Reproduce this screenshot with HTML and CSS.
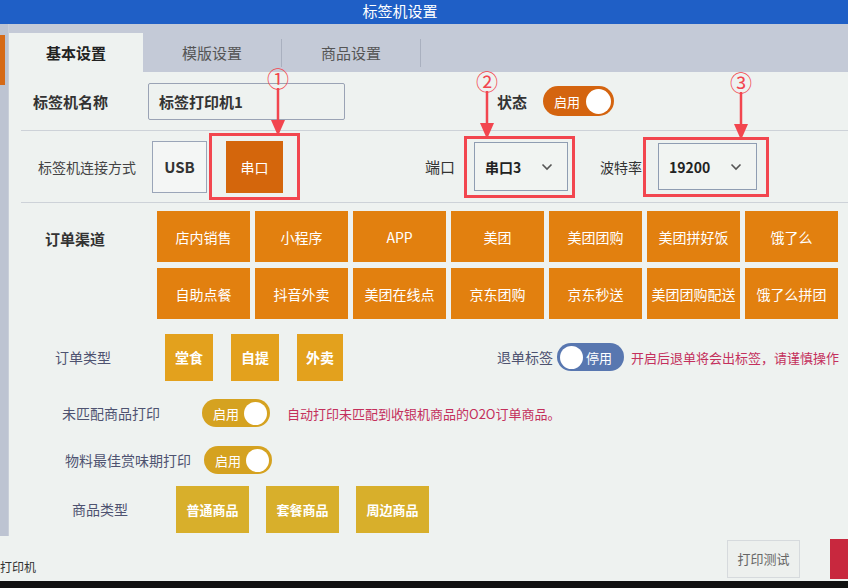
FILE: index.html
```html
<!DOCTYPE html>
<html lang="zh-CN">
<head>
    <meta charset="UTF-8">
    <meta name="viewport" content="width=device-width, initial-scale=1.0">
    <title>标签机设置</title>
    <link rel="stylesheet" href="styles.css">
</head>
<body>
    <div class="topbar"><span>标签机设置</span></div>
    <div class="main">
        <div class="side"><div class="side-tab"></div></div>
        <div class="dialog">
            <div class="tabs">
                <div class="tab active">基本设置</div>
                <div class="tab">模版设置</div>
                <div class="tab">商品设置</div>
            </div>

            <div class="row row-name">
                <span class="lbl lbl-name">标签机名称</span>
                <div class="input">标签打印机1</div>
                <span class="lbl lbl-state">状态</span>
                <div class="toggle on orange"><span>启用</span><i></i></div>
            </div>

            <div class="row row-conn">
                <span class="lbl lbl-conn">标签机连接方式</span>
                <div class="opt">USB</div>
                <div class="mark mark-1">
                    <div class="note note-1">
                        <span>①</span>
                        <svg width="16" height="48" viewBox="0 0 16 48"><line x1="8" y1="0" x2="8" y2="36" stroke="#f2464f" stroke-width="2.5"/><polygon points="1,32 15,32 8,48" fill="#f2464f"/></svg>
                    </div>
                    <div class="opt selected">串口</div>
                </div>
                <span class="lbl lbl-port">端口</span>
                <div class="mark mark-2">
                    <div class="note note-2">
                        <span>②</span>
                        <svg width="16" height="48" viewBox="0 0 16 48"><line x1="8" y1="0" x2="8" y2="36" stroke="#f2464f" stroke-width="2.5"/><polygon points="1,32 15,32 8,48" fill="#f2464f"/></svg>
                    </div>
                    <div class="select sel-port">串口3
                        <svg width="12" height="8" viewBox="0 0 12 8"><polyline points="1.5,1.5 6,6 10.5,1.5" fill="none" stroke="#555" stroke-width="1.6"/></svg>
                    </div>
                </div>
                <span class="lbl lbl-baud">波特率</span>
                <div class="mark mark-3">
                    <div class="note note-3">
                        <span>③</span>
                        <svg width="16" height="48" viewBox="0 0 16 48"><line x1="8" y1="0" x2="8" y2="36" stroke="#f2464f" stroke-width="2.5"/><polygon points="1,32 15,32 8,48" fill="#f2464f"/></svg>
                    </div>
                    <div class="select sel-baud">19200
                        <svg width="12" height="8" viewBox="0 0 12 8"><polyline points="1.5,1.5 6,6 10.5,1.5" fill="none" stroke="#555" stroke-width="1.6"/></svg>
                    </div>
                </div>
            </div>

            <div class="row row-channel">
                <span class="lbl lbl-channel">订单渠道</span>
                <div class="channels">
                    <div class="chip">店内销售</div>
                    <div class="chip">小程序</div>
                    <div class="chip">APP</div>
                    <div class="chip">美团</div>
                    <div class="chip">美团团购</div>
                    <div class="chip">美团拼好饭</div>
                    <div class="chip">饿了么</div>
                    <div class="chip">自助点餐</div>
                    <div class="chip">抖音外卖</div>
                    <div class="chip">美团在线点</div>
                    <div class="chip">京东团购</div>
                    <div class="chip">京东秒送</div>
                    <div class="chip">美团团购配送</div>
                    <div class="chip">饿了么拼团</div>
                </div>
            </div>

            <div class="row row-type">
                <span class="lbl soft lbl-type">订单类型</span>
                <div class="sq">堂食</div>
                <div class="sq">自提</div>
                <div class="sq">外卖</div>
                <span class="lbl soft lbl-refund">退单标签</span>
                <div class="toggle off blue"><i></i><span>停用</span></div>
                <span class="warn">开启后退单将会出标签，请谨慎操作</span>
            </div>

            <div class="row row-unmatched">
                <span class="lbl soft lbl-unmatched">未匹配商品打印</span>
                <div class="toggle on gold"><span>启用</span><i></i></div>
                <span class="warn">自动打印未匹配到收银机商品的O2O订单商品。</span>
            </div>

            <div class="row row-material">
                <span class="lbl soft lbl-material">物料最佳赏味期打印</span>
                <div class="toggle on gold"><span>启用</span><i></i></div>
            </div>

            <div class="row row-goods">
                <span class="lbl soft lbl-goods">商品类型</span>
                <div class="goods">普通商品</div>
                <div class="goods">套餐商品</div>
                <div class="goods">周边商品</div>
            </div>
        </div>
    </div>
    <div class="footer">
        <span class="printer">打印机</span>
        <div class="btn-test">打印测试</div>
        <div class="btn-save"></div>
    </div>
    <div class="bezel"></div>
</body>
</html>
```

FILE: styles.css
```css
body {
    margin: 0;
    width: 848px;
    height: 588px;
    overflow: hidden;
    font-family: "Noto Sans CJK SC", "Noto Sans", sans-serif;
    background-color: #eef2f0;
    color: #333;
}
.topbar {
    height: 24px;
    background-color: #1f5fc6;
    color: #fff;
    text-align: center;
    font-size: 15px;
    line-height: 22px;
    overflow: hidden;
}
.topbar span {
    display: inline-block;
    margin-left: -48px;
}
.main {
    display: flex;
    height: 512px;
}
.side {
    width: 8px;
    background-color: #bdc4d2;
    padding-top: 11px;
}
.side-tab {
    width: 5px;
    height: 50px;
    background-color: #d56a17;
}
.dialog {
    flex: 1;
    background-color: #eef2f0;
    border-left: 1px solid #c9cfd9;
}
.tabs {
    display: flex;
    height: 39px;
    padding-top: 9px;
    background-color: #c4cad7;
}
.tab {
    width: 139px;
    height: 28px;
    margin-top: 6px;
    box-sizing: border-box;
    border-right: 1px solid #a9b0bf;
    font-size: 15px;
    line-height: 28px;
    text-align: center;
    color: #555;
}
.tab.active {
    width: 134px;
    height: 39px;
    margin-top: 0;
    line-height: 39px;
    background-color: #eef2f0;
    color: #222;
    font-weight: bold;
    border-right: none;
}
.row {
    display: flex;
    align-items: center;
    box-sizing: border-box;
}
.lbl {
    font-size: 15px;
    white-space: nowrap;
}
.lbl.soft {
    font-size: 14px;
    color: #4e5370;
}
.row-name {
    height: 59px;
    margin-left: 12px;
    padding-left: 12px;
    border-bottom: 1px solid #cdd2d8;
}
.lbl-name {
    width: 115px;
    font-weight: bold;
}
.input {
    width: 197px;
    height: 37px;
    box-sizing: border-box;
    border: 1px solid #9aa3b5;
    border-radius: 2px;
    padding-left: 10px;
    font-size: 15px;
    line-height: 35px;
    font-weight: bold;
}
.lbl-state {
    margin-left: 152px;
    width: 46px;
    font-weight: bold;
}
.toggle {
    display: flex;
    align-items: center;
    justify-content: space-between;
    flex-shrink: 0;
    box-sizing: border-box;
    height: 28px;
    width: 68px;
    border-radius: 14px;
    padding: 0 3px 0 11px;
    color: #fff;
    font-size: 13px;
}
.toggle i {
    width: 23px;
    height: 23px;
    border-radius: 50%;
    background-color: #fff;
}
.toggle.off {
    padding: 0 12px 0 3px;
}
.toggle.orange {
    width: 71px;
    height: 30px;
    border-radius: 15px;
    background-color: #d4640f;
}
.toggle.orange i {
    width: 25px;
    height: 25px;
}
.toggle.blue {
    width: 67px;
    background-color: #5877b0;
}
.toggle.gold {
    background-color: #d5a220;
}
.row-conn {
    height: 72px;
    margin-left: 12px;
    padding-left: 17px;
    border-bottom: 1px solid #cdd2d8;
}
.lbl-conn {
    width: 114px;
    font-size: 14px;
    color: #444;
}
.opt {
    width: 55px;
    height: 52px;
    box-sizing: border-box;
    border: 1px solid #9aa5b8;
    background-color: #f4f6f5;
    font-size: 15px;
    font-weight: bold;
    display: flex;
    align-items: center;
    justify-content: center;
}
.opt.selected {
    width: 57px;
    border: none;
    background-color: #d4660c;
    color: #fff;
    font-size: 14px;
    font-weight: normal;
}
.mark {
    position: relative;
    display: flex;
    align-items: center;
    box-sizing: border-box;
    border: 3px solid #f2464f;
}
.mark-1 {
    width: 91px;
    height: 67px;
    margin-left: 2px;
    padding-left: 14px;
}
.mark-2 {
    width: 111px;
    height: 62px;
    padding-left: 7px;
}
.mark-3 {
    width: 126px;
    height: 60px;
    padding-left: 12px;
}
.note {
    position: absolute;
    bottom: 100%;
    display: flex;
    flex-direction: column;
    align-items: center;
    transform: translateX(-50%);
    color: #f2464f;
    font-size: 22px;
    line-height: 22px;
    z-index: 2;
}
.note-1 { left: 66px; }
.note-2 { left: 20px; }
.note-3 { left: 95px; }
.lbl-port {
    margin-left: 125px;
    width: 39px;
}
.lbl-baud {
    margin-left: 25px;
    width: 43px;
    font-size: 14px;
}
.select {
    display: flex;
    align-items: center;
    justify-content: space-between;
    box-sizing: border-box;
    border: 1px solid #8f9db2;
    background-color: #f1f4f2;
    padding: 0 14px 0 10px;
    font-size: 14px;
    font-weight: bold;
    color: #222;
}
.sel-port {
    width: 94px;
    height: 49px;
}
.sel-baud {
    width: 99px;
    height: 47px;
}
.row-channel {
    align-items: flex-start;
    padding: 8px 0 11px 36px;
}
.lbl-channel {
    width: 112px;
    padding-top: 17px;
    font-weight: bold;
}
.channels {
    display: grid;
    grid-template-columns: repeat(7, 93px);
    grid-auto-rows: 51px;
    gap: 6px 5px;
}
.chip {
    background-color: #e2800f;
    color: #fff;
    font-size: 14px;
    display: flex;
    align-items: center;
    justify-content: center;
}
.row-type {
    height: 54px;
    padding-left: 46px;
}
.lbl-type {
    width: 110px;
}
.sq {
    width: 48px;
    height: 47px;
    margin-right: 18px;
    background-color: #e3a11d;
    color: #fff;
    font-size: 14px;
    font-weight: bold;
    display: flex;
    align-items: center;
    justify-content: center;
}
.sq:nth-of-type(3) {
    width: 46px;
}
.lbl-refund {
    margin-left: 136px;
    width: 60px;
}
.warn {
    margin-left: 7px;
    font-size: 13px;
    color: #c4305c;
    white-space: nowrap;
}
.row-unmatched {
    height: 58px;
    padding-left: 53px;
}
.lbl-unmatched {
    width: 140px;
}
.row-unmatched .warn {
    margin-left: 17px;
}
.row-material {
    height: 36px;
    padding-left: 56px;
}
.lbl-material {
    width: 139px;
}
.row-goods {
    height: 62px;
    padding-left: 63px;
}
.lbl-goods {
    width: 104px;
    font-size: 13px;
}
.goods {
    width: 73px;
    height: 47px;
    margin-right: 17px;
    background-color: #d8af2b;
    color: #fff;
    font-size: 13px;
    font-weight: bold;
    display: flex;
    align-items: center;
    justify-content: center;
}
.footer {
    display: flex;
    align-items: center;
    height: 45px;
    background-color: #eef2f0;
    overflow: hidden;
}
.printer {
    flex-shrink: 0;
    width: 727px;
    align-self: flex-end;
    padding-bottom: 6px;
    font-size: 12px;
    color: #333;
}
.btn-test {
    flex-shrink: 0;
    width: 73px;
    height: 38px;
    box-sizing: border-box;
    border: 1px solid #d6dadd;
    background-color: #edf0ee;
    color: #666;
    font-size: 13px;
    display: flex;
    align-items: center;
    justify-content: center;
}
.btn-save {
    flex-shrink: 0;
    width: 30px;
    height: 40px;
    margin-left: 30px;
    background-color: #c8283e;
}
.bezel {
    height: 7px;
    background-color: #111;
}
```
